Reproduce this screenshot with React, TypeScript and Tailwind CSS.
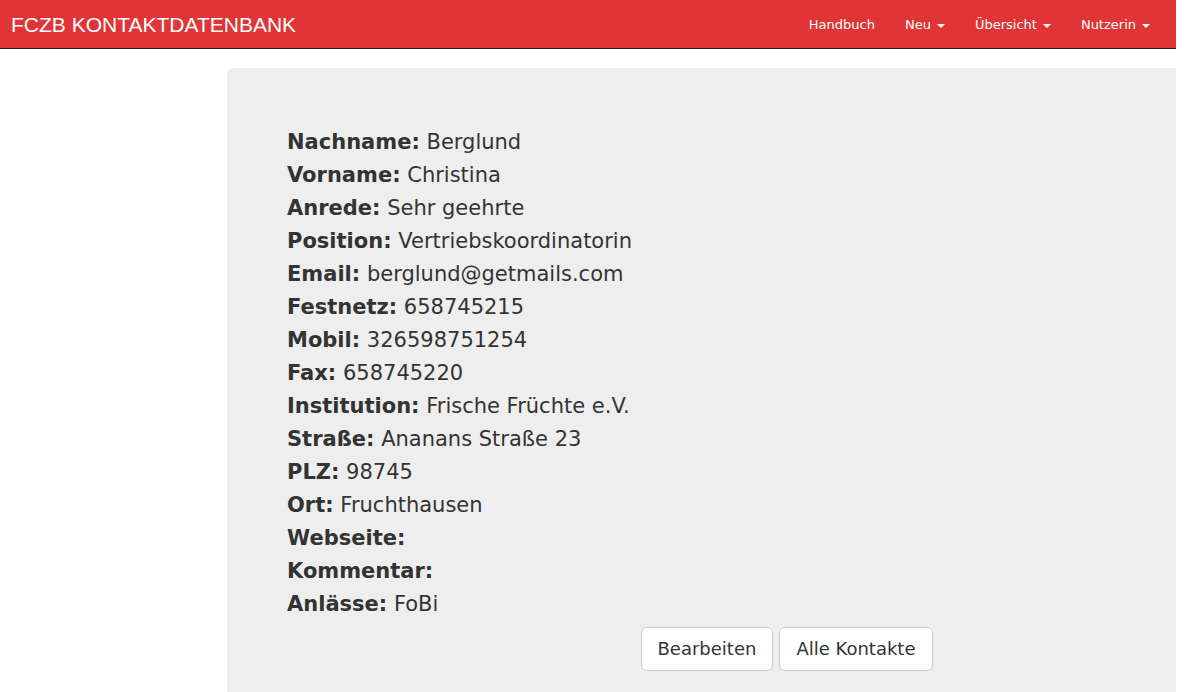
import React from 'react';

const fields: { label: string; value: string }[] = [
  { label: 'Nachname', value: 'Berglund' },
  { label: 'Vorname', value: 'Christina' },
  { label: 'Anrede', value: 'Sehr geehrte' },
  { label: 'Position', value: 'Vertriebskoordinatorin' },
  { label: 'Email', value: 'berglund@getmails.com' },
  { label: 'Festnetz', value: '658745215' },
  { label: 'Mobil', value: '326598751254' },
  { label: 'Fax', value: '658745220' },
  { label: 'Institution', value: 'Frische Früchte e.V.' },
  { label: 'Straße', value: 'Ananans Straße 23' },
  { label: 'PLZ', value: '98745' },
  { label: 'Ort', value: 'Fruchthausen' },
  { label: 'Webseite', value: '' },
  { label: 'Kommentar', value: '' },
  { label: 'Anlässe', value: 'FoBi' },
];

const Caret = () => (
  <span className="inline-block ml-[6px] align-middle w-0 h-0 border-t-[4px] border-t-white border-x-[4px] border-x-transparent" />
);

const NavLink: React.FC<{ label: string; dropdown?: boolean }> = ({ label, dropdown }) => (
  <a className="px-[15px] pt-[2px] text-[13px] text-white cursor-pointer">
    {label}
    {dropdown && <Caret />}
  </a>
);

const App: React.FC = () => {
  return (
    <div className="w-[1176px] min-h-screen overflow-hidden bg-white font-['DejaVu_Sans',sans-serif] text-[#333]">
      <nav className="h-[49px] bg-[#e03436] border-b border-[#1a1a1a] flex items-center justify-between pl-[11px] pr-[11px]">
        <span className="pt-[1px] font-['Liberation_Sans',Arial,sans-serif] text-[21px] text-white">
          FCZB KONTAKTDATENBANK
        </span>
        <div className="flex items-center">
          <NavLink label="Handbuch" />
          <NavLink label="Neu" dropdown />
          <NavLink label="Übersicht" dropdown />
          <NavLink label="Nutzerin" dropdown />
        </div>
      </nav>

      <main className="pt-[19px] pl-[227px]">
        <div className="w-[1117px] min-h-[640px] rounded-md bg-[#eeeeee] px-[60px] pt-[58px] pb-[48px]">
          <div className="text-[21px] leading-[33px]">
            {fields.map((f) => (
              <div key={f.label}>
                <strong className="font-bold">{f.label}:</strong>
                {f.value && <span> {f.value}</span>}
              </div>
            ))}
          </div>
          <div className="flex justify-center gap-[6px] mt-[6px] pl-[2px]">
            <button className="bg-white border border-[#cccccc] rounded-md px-4 py-[10px] text-[18px] leading-[22px] text-[#333]">
              Bearbeiten
            </button>
            <button className="bg-white border border-[#cccccc] rounded-md px-4 py-[10px] text-[18px] leading-[22px] text-[#333]">
              Alle Kontakte
            </button>
          </div>
        </div>
      </main>
    </div>
  );
};

export default App;
